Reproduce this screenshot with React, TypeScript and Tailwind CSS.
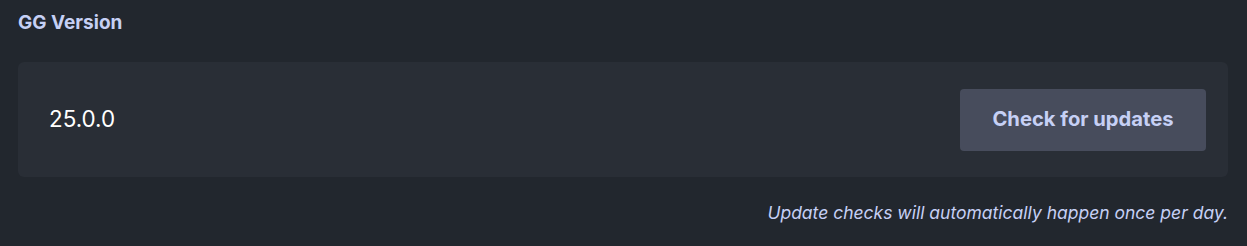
export default function App() {
  return (
    <div className="h-[246px] w-full bg-[#22272e] pl-[18px] pr-[19px] pt-[11px] font-['Inter',sans-serif]">
      <h2 className="text-[19px] font-bold leading-[24px] text-[#c6d0f5]">GG Version</h2>
      <div className="mt-[27px] flex h-[115px] items-center justify-between rounded-md bg-[#292e36] pl-[31px] pr-[22px]">
        <span className="text-[22.4px] leading-none text-white">25.0.0</span>
        <button className="h-[62px] w-[246px] rounded bg-[#474c5c] text-[20.2px] font-bold text-[#c6d0f5]">
          Check for updates
        </button>
      </div>
      <p className="mt-[24px] text-right text-[17.5px] italic leading-[24px] text-[#c6d0f5]">
        Update checks will automatically happen once per day.
      </p>
    </div>
  );
}
